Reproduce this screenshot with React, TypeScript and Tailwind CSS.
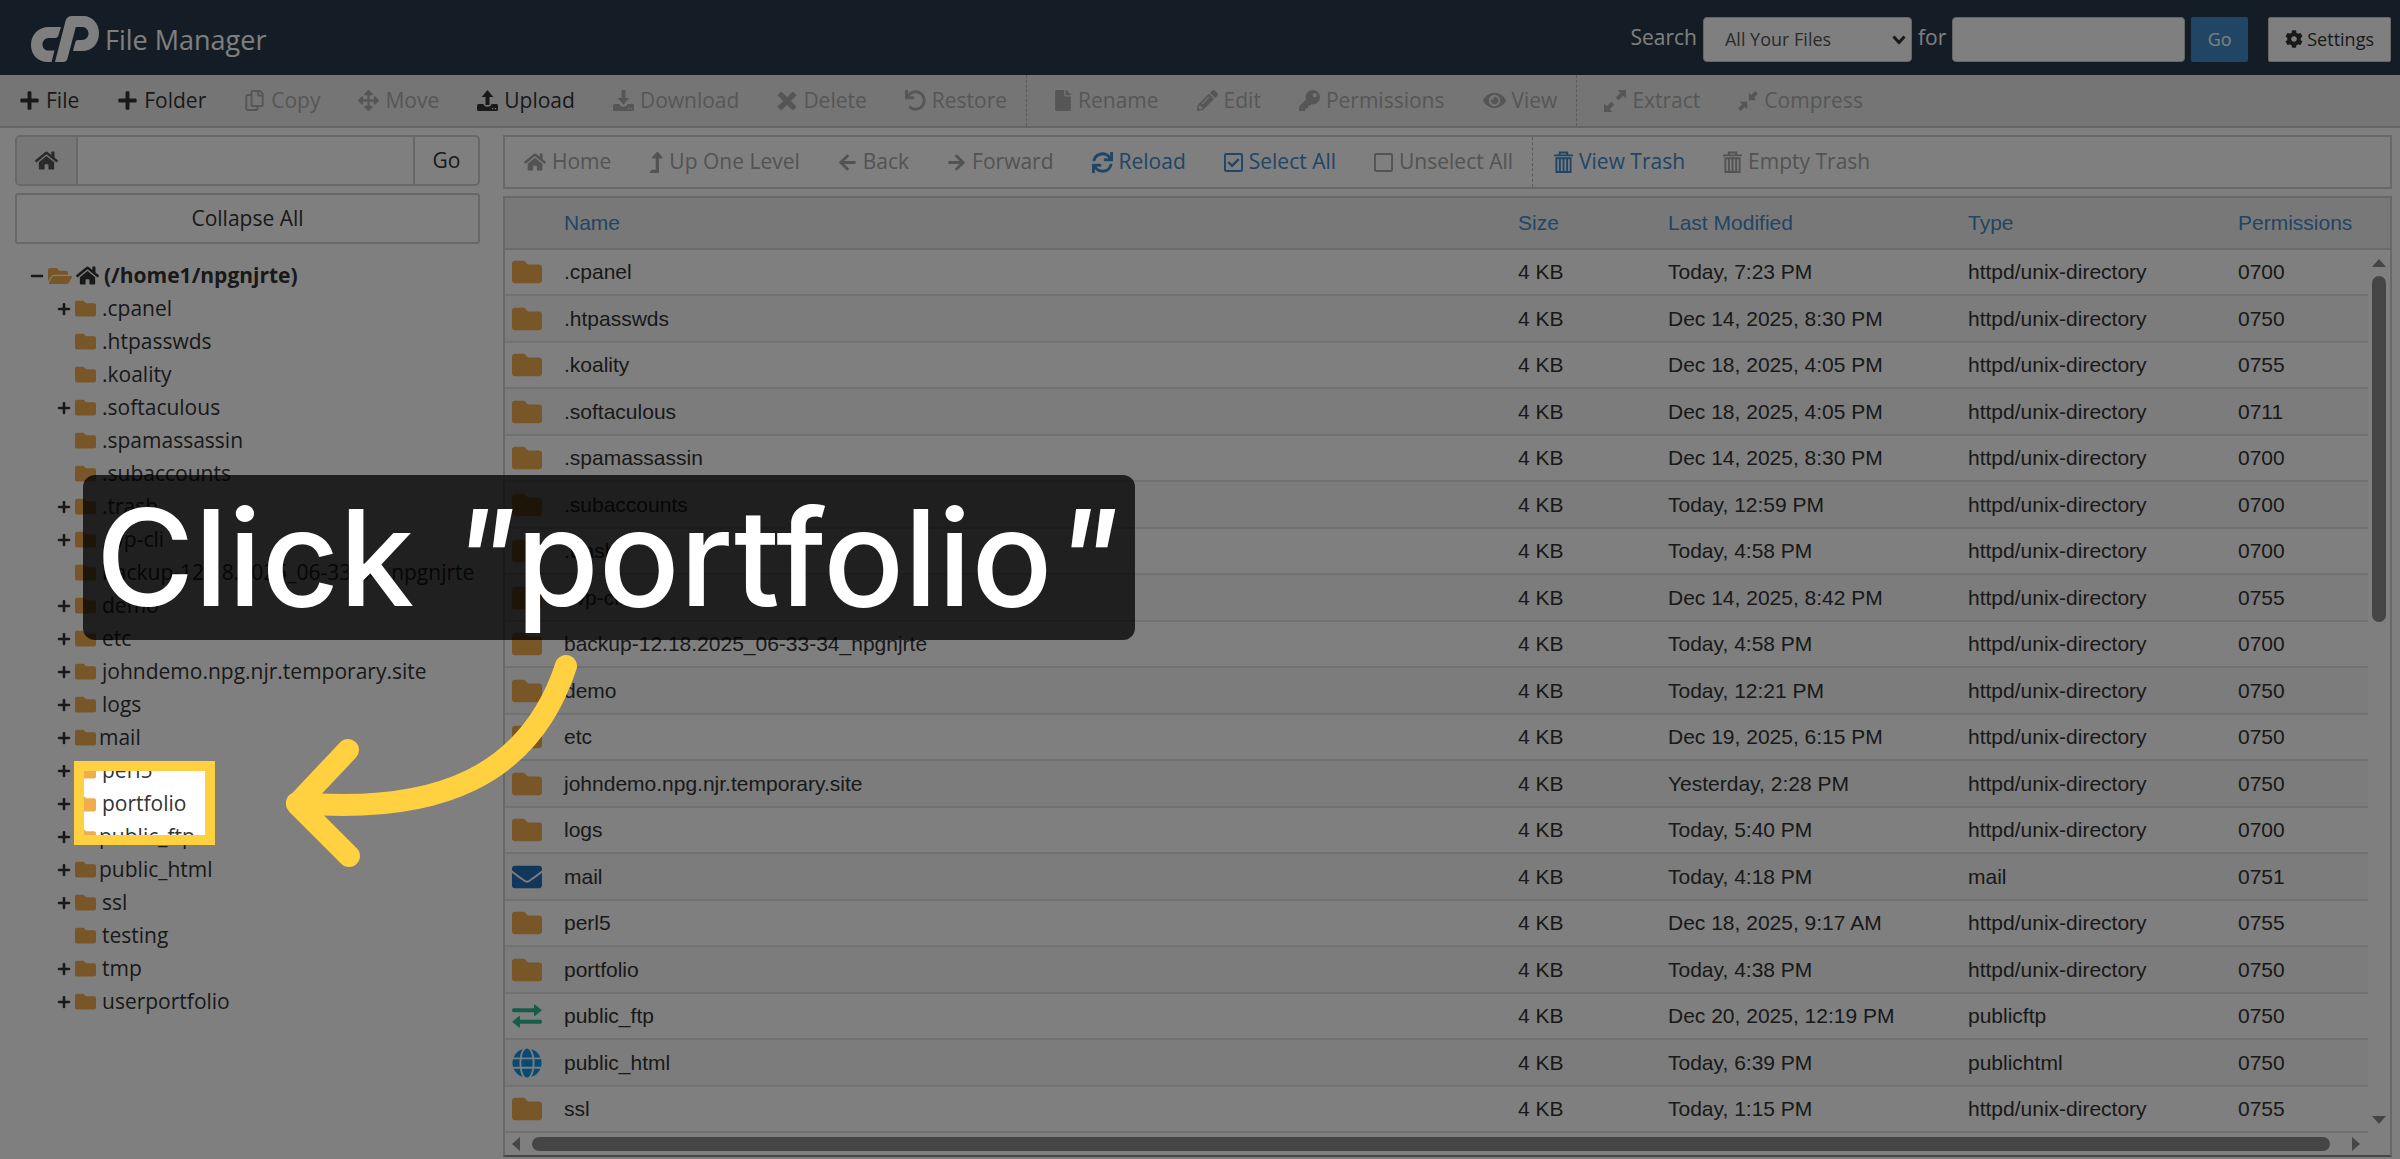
import type { ComponentType, ReactNode } from "react";
import {
  FaArrowLeft,
  FaArrowRight,
  FaArrowsAlt,
  FaCog,
  FaEnvelope,
  FaEye,
  FaFile,
  FaFolder,
  FaFolderOpen,
  FaGlobe,
  FaHome,
  FaKey,
  FaLevelUpAlt,
  FaMinus,
  FaPencilAlt,
  FaPlus,
  FaRegCopy,
  FaSync,
  FaUndo,
} from "react-icons/fa";

type IconProps = { className?: string };
type Icon = ComponentType<IconProps>;

const TRAY = "M0 15.500Q0 14 1.500 14H6.500q.5 2.800 4 2.800t4-2.800h5q1.500 0 1.500 1.500v4q0 1.500-1.500 1.500h-18Q0 21 0 19.500zM15 18v1.300h1.300V18zM17.800 18v1.300h1.300V18z";

const UploadIcon = ({ className }: IconProps) => (
  <svg viewBox="0 0 21 21" className={className} fill="currentColor" fillRule="evenodd" aria-hidden="true">
    <path d={TRAY} />
    <path d="M8.500 15V7H4.700L10.500 0l5.800 7h-3.800v8z" />
  </svg>
);

const DownloadIcon = ({ className }: IconProps) => (
  <svg viewBox="0 0 21 21" className={className} fill="currentColor" fillRule="evenodd" aria-hidden="true">
    <path d={TRAY} />
    <path d="M8.500 0v8H4.700l5.800 6.800 5.800-6.800h-3.800V0z" />
  </svg>
);

const TimesIcon = ({ className }: IconProps) => (
  <svg viewBox="0 0 18 18" className={className} aria-hidden="true">
    <path d="M3.2 3.2 14.8 14.8M14.8 3.2 3.2 14.8" stroke="currentColor" strokeWidth="5.500" strokeLinecap="square" strokeLinejoin="round" />
  </svg>
);

const ExtractIcon = ({ className }: IconProps) => (
  <svg viewBox="0 0 22 22" className={className} fill="currentColor" aria-hidden="true">
    <path d="M13.5 0H22v8.5l-2.8-2.8-4.6 4.6-2.9-2.9 4.6-4.6zM8.500 22H0v-8.500l2.800 2.800 4.600-4.600 2.900 2.900-4.600 4.600z" />
  </svg>
);

const CompressIcon = ({ className }: IconProps) => (
  <svg viewBox="0 0 20 20" className={className} fill="currentColor" aria-hidden="true">
    <path d="M10.800 9.200V1.700l2.400 2.400L17.300 0 20 2.700l-4.100 4.100 2.400 2.400zM9.200 10.800v7.500l-2.400-2.400L2.700 20 0 17.300l4.100-4.100-2.400-2.400z" />
  </svg>
);

const SquareIcon = ({ className }: IconProps) => (
  <svg viewBox="0 0 20 20" className={className} fill="none" stroke="currentColor" strokeWidth="2" aria-hidden="true">
    <rect x="1" y="1" width="18" height="18" rx="1.500" />
  </svg>
);

const CheckSquareIcon = ({ className }: IconProps) => (
  <svg viewBox="0 0 20 20" className={className} fill="none" stroke="currentColor" strokeWidth="2" aria-hidden="true">
    <rect x="1" y="1" width="18" height="18" rx="1.500" />
    <path d="M4.500 9.500 8.500 13.500 15.500 6.500" strokeWidth="2.500" />
  </svg>
);

const TrashIcon = ({ className }: IconProps) => (
  <svg viewBox="0 0 20 23" className={className} fill="none" stroke="currentColor" aria-hidden="true">
    <path d="M0 4h20M6 4V1h8v3" strokeWidth="2" />
    <path d="M2.500 7h15v14.500h-15zM6.200 7v14.500M10 7v14.500M13.800 7v14.500" strokeWidth="2" />
  </svg>
);

const TransferIcon = ({ className }: IconProps) => (
  <svg viewBox="0 0 30 24" className={className} fill="currentColor" aria-hidden="true">
    <path d="M1.500 4.300H22V1.200Q22 0 23.200.7L30 6.200 23.200 11.800Q22 12.500 22 11.300V8.300H1.500Q0 8.300 0 6.300T1.500 4.300z" />
    <path d="M28.500 15.700H8v-3Q8 11.500 6.800 12.200L0 17.800l6.800 5.500Q8 24 8 22.800v-3.100h20.500q1.500 0 1.500-2t-1.500-2z" />
  </svg>
);

const CpLogo = () => (
  <svg viewBox="31 17 68 46" className="h-[46px] w-[68px]" fill="#fff" aria-hidden="true">
    <path d="M61 28H49C38 28 31 36 31 46c0 10 7 17 17 17h3.500l3-11.500H48c-3 0-5.500-2.500-5.500-6S45 39 48.500 39H55q2.500 0 3.200-2z" />
    <path d="M55 63 65.500 22Q67 17 72 17h11c10 0 16 8 16 17 0 11-7 18-17 18h-9l2.300-9q.7-2 2.700-2h4c4 0 6.500-3 6.500-6.500S86 28 82.500 28h-6.700l-8.300 31.500Q66.500 63 63 63z" />
  </svg>
);

type Action = { label: string; icon: Icon; size: string; enabled?: boolean; divider?: string };

const fileActions: Action[] = [
  { label: "File", icon: FaPlus, size: "size-[21px]", enabled: true },
  { label: "Folder", icon: FaPlus, size: "size-[21px]", enabled: true },
  { label: "Copy", icon: FaRegCopy, size: "size-[21px]" },
  { label: "Move", icon: FaArrowsAlt, size: "size-[21px]" },
  { label: "Upload", icon: UploadIcon, size: "size-[21px]", enabled: true },
  { label: "Download", icon: DownloadIcon, size: "size-[21px]" },
  { label: "Delete", icon: TimesIcon, size: "h-[18px] w-[20px]" },
  { label: "Restore", icon: FaUndo, size: "size-[21px]", divider: "mr-2" },
  { label: "Rename", icon: FaFile, size: "h-[21px] w-[18px]" },
  { label: "Edit", icon: FaPencilAlt, size: "size-[21px]" },
  { label: "Permissions", icon: FaKey, size: "size-[21px]" },
  { label: "View", icon: FaEye, size: "size-[23px]", divider: "mr-2" },
  { label: "Extract", icon: ExtractIcon, size: "size-[22px]" },
  { label: "Compress", icon: CompressIcon, size: "size-[20px]" },
];

const viewActions: Action[] = [
  { label: "Home", icon: FaHome, size: "size-[22px]" },
  { label: "Up One Level", icon: FaLevelUpAlt, size: "h-[21px] w-[14px]" },
  { label: "Back", icon: FaArrowLeft, size: "size-[19px]" },
  { label: "Forward", icon: FaArrowRight, size: "size-[19px]" },
  { label: "Reload", icon: FaSync, size: "size-[21px]", enabled: true },
  { label: "Select All", icon: CheckSquareIcon, size: "size-[19px]", enabled: true },
  { label: "Unselect All", icon: SquareIcon, size: "size-[19px]", divider: "mr-[2px]" },
  { label: "View Trash", icon: TrashIcon, size: "h-[23px] w-[19px]", enabled: true },
  { label: "Empty Trash", icon: TrashIcon, size: "h-[23px] w-[19px]" },
];

function ActionBar({ actions, on, off }: { actions: Action[]; on: string; off: string }) {
  return (
    <>
      {actions.map(({ label, icon: Glyph, size, enabled, divider }) => (
        <button
          key={label}
          type="button"
          disabled={!enabled}
          className={`flex h-full items-center gap-[6px] px-[19px] whitespace-nowrap ${enabled ? on : off} ${
            divider ? `${divider} border-r border-dashed border-[#b8b8b8]` : ""
          }`}
        >
          <Glyph className={`shrink-0 ${size}`} />
          {label}
        </button>
      ))}
    </>
  );
}

type Node = { name: string; open?: boolean; tight?: boolean };

const nodes: Node[] = [
  { name: ".cpanel", open: true },
  { name: ".htpasswds" },
  { name: ".koality" },
  { name: ".softaculous", open: true },
  { name: ".spamassassin" },
  { name: ".subaccounts" },
  { name: ".trash", open: true },
  { name: ".wp-cli", open: true },
  { name: "backup-12.18.2025_06-33-34_npgnjrte" },
  { name: "demo", open: true },
  { name: "etc", open: true },
  { name: "johndemo.npg.njr.temporary.site", open: true },
  { name: "logs", open: true },
  { name: "mail", open: true, tight: true },
  { name: "perl5", open: true },
  { name: "portfolio", open: true },
  { name: "public_ftp", open: true, tight: true },
  { name: "public_html", open: true, tight: true },
  { name: "ssl", open: true },
  { name: "testing" },
  { name: "tmp", open: true },
  { name: "userportfolio", open: true },
];

const DIR = "httpd/unix-directory";

const rows: [string, string, string, string][] = [
  [".cpanel", "Today, 7:23 PM", DIR, "0700"],
  [".htpasswds", "Dec 14, 2025, 8:30 PM", DIR, "0750"],
  [".koality", "Dec 18, 2025, 4:05 PM", DIR, "0755"],
  [".softaculous", "Dec 18, 2025, 4:05 PM", DIR, "0711"],
  [".spamassassin", "Dec 14, 2025, 8:30 PM", DIR, "0700"],
  [".subaccounts", "Today, 12:59 PM", DIR, "0700"],
  [".trash", "Today, 4:58 PM", DIR, "0700"],
  [".wp-cli", "Dec 14, 2025, 8:42 PM", DIR, "0755"],
  ["backup-12.18.2025_06-33-34_npgnjrte", "Today, 4:58 PM", DIR, "0700"],
  ["demo", "Today, 12:21 PM", DIR, "0750"],
  ["etc", "Dec 19, 2025, 6:15 PM", DIR, "0750"],
  ["johndemo.npg.njr.temporary.site", "Yesterday, 2:28 PM", DIR, "0750"],
  ["logs", "Today, 5:40 PM", DIR, "0700"],
  ["mail", "Today, 4:18 PM", "mail", "0751"],
  ["perl5", "Dec 18, 2025, 9:17 AM", DIR, "0755"],
  ["portfolio", "Today, 4:38 PM", DIR, "0750"],
  ["public_ftp", "Dec 20, 2025, 12:19 PM", "publicftp", "0750"],
  ["public_html", "Today, 6:39 PM", "publichtml", "0750"],
  ["ssl", "Today, 1:15 PM", DIR, "0755"],
];

function rowIcon(type: string): ReactNode {
  if (type === "mail") return <FaEnvelope className="size-[30px] text-[#246eb8]" />;
  if (type === "publicftp") return <TransferIcon className="h-[24px] w-[30px] text-[#2fb890]" />;
  if (type === "publichtml") return <FaGlobe className="size-[30px] text-[#0f96e8]" />;
  return <FaFolder className="size-[30px] text-[#f0ad4e]" />;
}

function Header() {
  return (
    <header className="flex h-[75px] items-center justify-between bg-[#293a4a] pt-[3px] pr-[9px] pl-[31px] text-[21px] text-white">
      <h1 className="flex items-center gap-[6px] text-[27px] leading-none">
        <CpLogo />
        File Manager
      </h1>
      <form className="flex items-center gap-[6px]" onSubmit={(e) => e.preventDefault()}>
        <label htmlFor="scope" className="pb-[2px]">Search</label>
        <div className="relative">
          <select
            id="scope"
            className="block h-[45px] w-[209px] appearance-none rounded-[4px] border border-[#ccc] bg-white pl-[21px] text-[18px] text-[#555]"
          >
            <option>All Your Files</option>
          </select>
          <svg viewBox="0 0 14 10" className="pointer-events-none absolute top-[18px] right-[6px] h-[10px] w-[14px]" aria-hidden="true">
            <path d="M1.500 1.500 7 7.500 12.500 1.500" fill="none" stroke="#333" strokeWidth="3" />
          </svg>
        </div>
        <label htmlFor="query" className="pb-[2px]">for</label>
        <input id="query" type="text" className="h-[45px] w-[233px] rounded-[4px] border border-[#ccc] bg-white px-3 text-[18px] text-[#555]" />
        <button type="submit" className="h-[45px] w-[57px] rounded-[2px] bg-[#428bca] text-[18px]">
          Go
        </button>
        <button type="button" className="ml-[14px] flex h-[45px] items-center gap-[4px] rounded-[2px] border border-[#ccc] bg-white px-[16px] text-[18px] text-[#333]">
          <FaCog className="size-[18px]" />
          Settings
        </button>
      </form>
    </header>
  );
}

function Sidebar() {
  return (
    <aside className="w-[503px] shrink-0 pr-[23px] pl-[15px]">
      <form className="flex h-[51px] overflow-hidden rounded-[5px] border-2 border-[#d0d0d0]" onSubmit={(e) => e.preventDefault()}>
        <label htmlFor="path" className="flex w-[61px] items-center justify-center border-r-2 border-[#d0d0d0] bg-[#eee]">
          <FaHome className="size-[23px] text-[#555]" aria-label="Path" />
        </label>
        <input id="path" type="text" className="min-w-0 flex-1 px-3" />
        <button type="submit" className="w-[65px] border-l-2 border-[#d0d0d0]">
          Go
        </button>
      </form>
      <button type="button" className="mt-[7px] h-[51px] w-full rounded-[3px] border-2 border-[#d0d0d0]">
        Collapse All
      </button>
      <nav className="mt-[15px] leading-[33px] whitespace-nowrap" aria-label="Folders">
        <button type="button" className="flex items-center pl-[15px] font-bold">
          <FaMinus className="mr-[4px] size-[14px]" />
          <FaFolderOpen className="mr-[4px] size-[24px] text-[#f0ad4e]" />
          <FaHome className="mr-[5px] size-[23px]" />
          (/home1/npgnjrte)
        </button>
        <ul className="pl-[42px]">
          {nodes.map((n) => (
            <li key={n.name} className="flex h-[33px] items-center">
              <span className="w-[18px]">{n.open && <FaPlus className="size-[14px]" />}</span>
              <button type="button" className={`flex items-center ${n.tight ? "gap-[3px]" : "gap-[6px]"}`}>
                <FaFolder className="size-[21px] text-[#f0ad4e]" />
                {n.name}
              </button>
            </li>
          ))}
        </ul>
      </nav>
    </aside>
  );
}

function FileTable() {
  const head = "border-b-2 border-[#d6d6d6] bg-[#f1f1f1] p-0 text-left font-normal text-[#428bca]";
  const cell = "border-b-2 border-[#e3e3e3] p-0";
  return (
    <section className="mt-[7px] border-2 border-[#d0d0d0] border-b-[#8c8c8c]">
      <table className="w-full table-fixed border-separate border-spacing-0 font-['Liberation_Sans',sans-serif]">
        <thead>
          <tr className="h-[52px]">
            <th className={`${head} w-[59px]`} aria-label="Icon" />
            <th className={head}>Name</th>
            <th className={`${head} w-[150px]`}>Size</th>
            <th className={`${head} w-[300px]`}>Last Modified</th>
            <th className={`${head} w-[270px]`}>Type</th>
            <th className={`${head} w-[130px]`}>Permissions</th>
            <th className={`${head} w-[22px]`} aria-label="Scroll" />
          </tr>
        </thead>
        <tbody>
          {rows.map(([name, modified, type, perms], i) => (
            <tr key={name} className="h-[46px] even:h-[47px] even:bg-[#f9f9f9]">
              <td className={`${cell} pl-[7px]`}>{rowIcon(type)}</td>
              <td className={cell}>{name}</td>
              <td className={cell}>4 KB</td>
              <td className={cell}>{modified}</td>
              <td className={cell}>{type}</td>
              <td className={cell}>{perms}</td>
              {i === 0 && (
                <td rowSpan={rows.length} className="h-px bg-white p-0" aria-hidden="true">
                  <div className="flex h-full flex-col items-center py-[9px]">
                    <svg viewBox="0 0 14 8" className="h-[8px] w-[14px]" fill="#8a8a8a">
                      <path d="M0 8 7 0l7 8z" />
                    </svg>
                    <div className="mt-[9px] h-[346px] w-[14px] rounded-full bg-[#8a8a8a]" />
                    <svg viewBox="0 0 14 8" className="mt-auto h-[8px] w-[14px]" fill="#8a8a8a">
                      <path d="M0 0 7 8l7-8z" />
                    </svg>
                  </div>
                </td>
              )}
            </tr>
          ))}
        </tbody>
      </table>
      <div className="flex h-[22px] items-center gap-[12px] pr-[30px] pl-[7px]" aria-hidden="true">
        <svg viewBox="0 0 8 14" className="h-[14px] w-[8px]" fill="#8a8a8a">
          <path d="M8 0 0 7l8 7z" />
        </svg>
        <div className="mr-[10px] h-[14px] flex-1 rounded-full bg-[#8a8a8a]" />
        <svg viewBox="0 0 8 14" className="h-[14px] w-[8px]" fill="#8a8a8a">
          <path d="M0 0 8 7l-8 7z" />
        </svg>
      </div>
    </section>
  );
}

function GuideOverlay() {
  return (
    <>
      <div className="pointer-events-none absolute top-[761px] left-[74px] h-[84px] w-[141px] border-[10px] border-[#ffd040] shadow-[0_0_0_3000px_rgba(0,0,0,0.5)]" />
      <p className="absolute top-[475px] left-[83px] rounded-[12px] bg-black/75 pr-[16px] pl-[13px] font-['Inter',sans-serif] text-[134px] leading-[165px] font-medium whitespace-nowrap text-white">
        Click <span className="italic">"</span>portfolio<span className="italic">"</span>
      </p>
      <svg viewBox="280 650 300 230" className="pointer-events-none absolute top-[650px] left-[280px] h-[230px] w-[300px]" fill="none" stroke="#ffd040" strokeWidth="22" strokeLinecap="round" strokeLinejoin="round" aria-hidden="true">
        <path d="M566 666C530 775 440 815 297 803" />
        <path d="M348 750 297 804 349 856" />
      </svg>
    </>
  );
}

export default function App() {
  return (
    <div className="relative min-h-screen overflow-hidden bg-white font-['Open_Sans',sans-serif] text-[21px] text-[#333]">
      <Header />
      <div className="flex h-[53px] items-center border-b-2 border-[#cbcbcb] bg-[#ebebeb]" role="toolbar" aria-label="File actions">
        <ActionBar actions={fileActions} on="text-[#333]" off="text-[#adadad]" />
      </div>
      <div className="flex pt-[7px] pr-[8px]">
        <Sidebar />
        <main className="min-w-0 flex-1">
          <div className="flex h-[54px] items-center border-2 border-[#d0d0d0]" role="toolbar" aria-label="View actions">
            <ActionBar actions={viewActions} on="text-[#428bca]" off="text-[#a6a6a6]" />
          </div>
          <FileTable />
        </main>
      </div>
      <GuideOverlay />
    </div>
  );
}
